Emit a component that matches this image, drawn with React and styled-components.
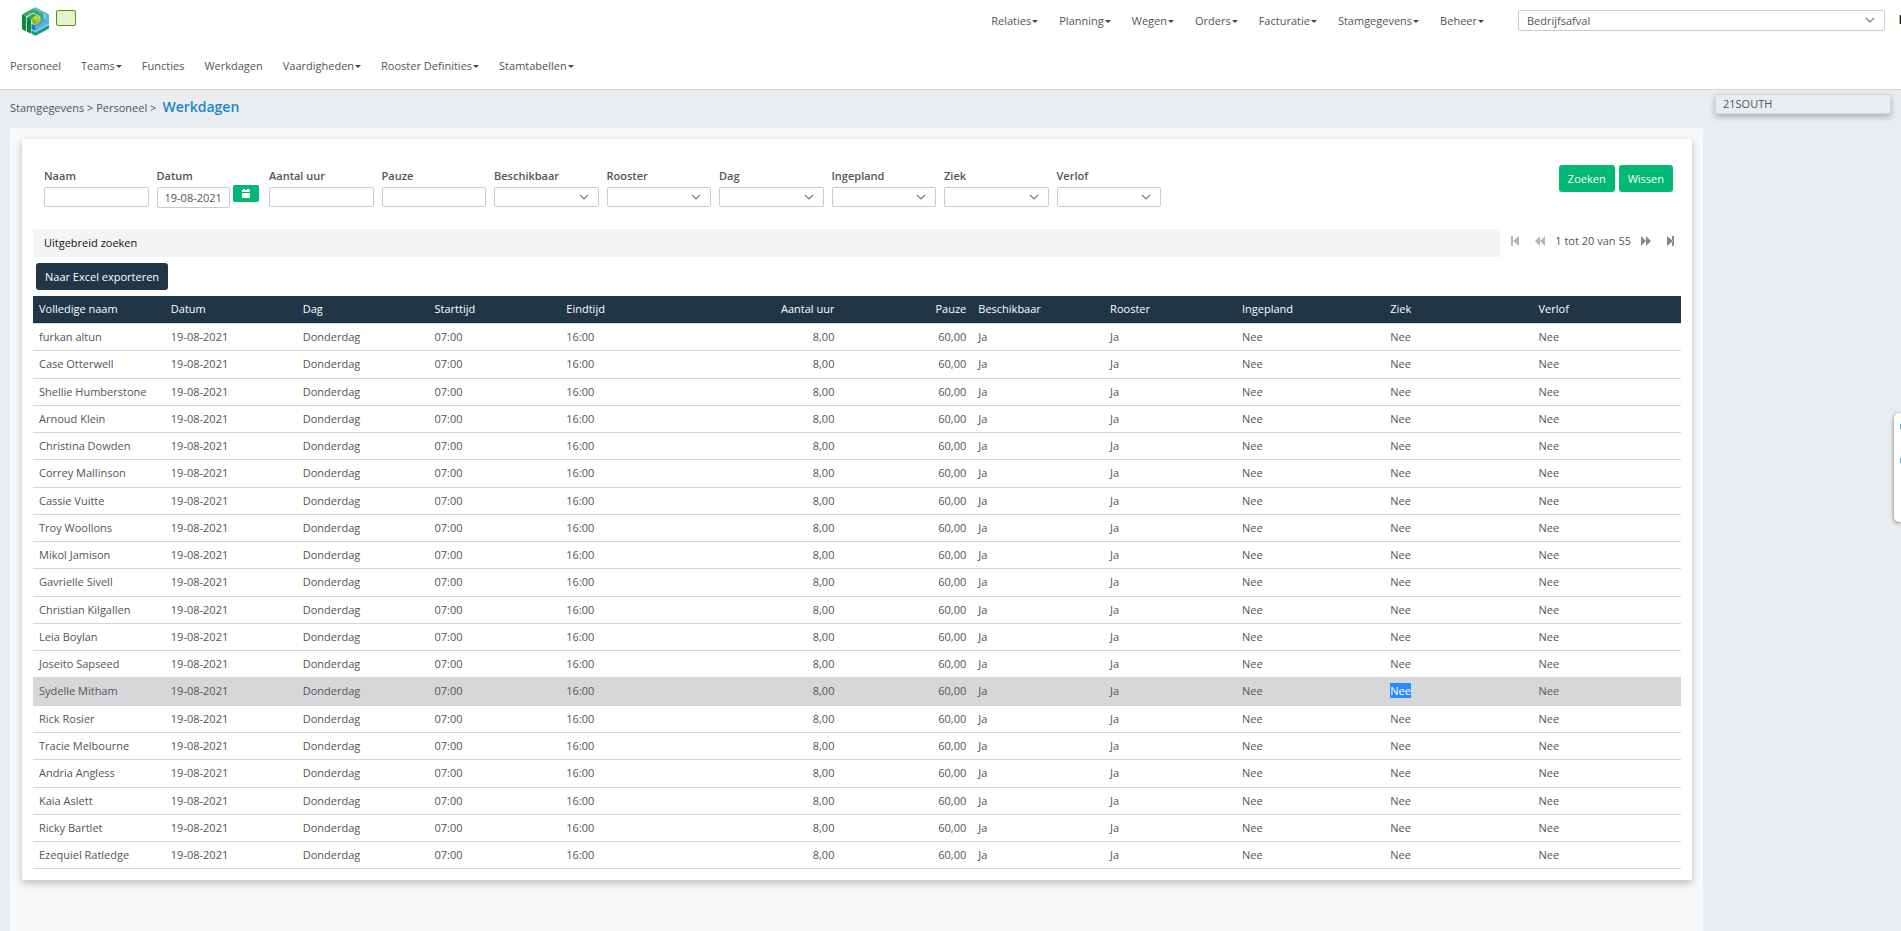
import React from "react";
import styled, { createGlobalStyle } from "styled-components";

const mainMenu = [
  "Relaties",
  "Planning",
  "Wegen",
  "Orders",
  "Facturatie",
  "Stamgegevens",
  "Beheer",
];

const subMenu = [
  { label: "Personeel" },
  { label: "Teams", dropdown: true },
  { label: "Functies" },
  { label: "Werkdagen" },
  { label: "Vaardigheden", dropdown: true },
  { label: "Rooster Definities", dropdown: true },
  { label: "Stamtabellen", dropdown: true },
];

const filters = [
  { id: "naam", label: "Naam", type: "text" },
  { id: "datum", label: "Datum", type: "date" },
  { id: "aantal", label: "Aantal uur", type: "text" },
  { id: "pauze", label: "Pauze", type: "text" },
  { id: "beschikbaar", label: "Beschikbaar", type: "select" },
  { id: "rooster", label: "Rooster", type: "select" },
  { id: "dag", label: "Dag", type: "select" },
  { id: "ingepland", label: "Ingepland", type: "select" },
  { id: "ziek", label: "Ziek", type: "select" },
  { id: "verlof", label: "Verlof", type: "select" },
];

const columns = [
  { key: "naam", label: "Volledige naam", width: 8 },
  { key: "datum", label: "Datum", width: 8 },
  { key: "dag", label: "Dag", width: 8 },
  { key: "start", label: "Starttijd", width: 8 },
  { key: "eind", label: "Eindtijd", width: 8 },
  { key: "uren", label: "Aantal uur", width: 9, align: "right" },
  { key: "pauze", label: "Pauze", width: 8, align: "right" },
  { key: "beschikbaar", label: "Beschikbaar", width: 8 },
  { key: "rooster", label: "Rooster", width: 8 },
  { key: "ingepland", label: "Ingepland", width: 9 },
  { key: "ziek", label: "Ziek", width: 9 },
  { key: "verlof", label: "Verlof", width: 9 },
];

const names = [
  "furkan altun",
  "Case Otterwell",
  "Shellie Humberstone",
  "Arnoud Klein",
  "Christina Dowden",
  "Correy Mallinson",
  "Cassie Vuitte",
  "Troy Woollons",
  "Mikol Jamison",
  "Gavrielle Sivell",
  "Christian Kilgallen",
  "Leia Boylan",
  "Joseito Sapseed",
  "Sydelle Mitham",
  "Rick Rosier",
  "Tracie Melbourne",
  "Andria Angless",
  "Kaia Aslett",
  "Ricky Bartlet",
  "Ezequiel Ratledge",
];

const activeName = "Sydelle Mitham";

const rows = names.map((naam) => ({
  naam,
  datum: "19-08-2021",
  dag: "Donderdag",
  start: "07:00",
  eind: "16:00",
  uren: "8,00",
  pauze: "60,00",
  beschikbaar: "Ja",
  rooster: "Ja",
  ingepland: "Nee",
  ziek: "Nee",
  verlof: "Nee",
}));

const Logo = () => (
  <svg width="27" height="29" viewBox="0 0 82 87" aria-hidden="true">
    <polygon points="41,0 82,22 82,65 41,87 0,66 0,22" fill="#bfe3e2" />
    <polygon points="0,22 12,28 12,73 0,67" fill="#0f8a3c" />
    <polygon points="0,22 33,4 66,20 66,36 56,42 56,28 33,16 12,28" fill="#3aaa5e" />
    <polygon points="15,31 27,36 27,80 15,75" fill="#0b8636" />
    <polygon points="15,31 34,20 52,30 52,35 42,30 27,38 27,36" fill="#2fa355" />
    <polygon points="33,4 41,0 82,22 82,50 41,73 41,60 70,44 70,22" fill="#56b3e4" />
    <polygon points="56,42 70,34 70,44 41,61 41,50" fill="#3f9fdb" />
    <polygon points="29,50 41,56 41,73 29,66" fill="#1679c9" />
    <polygon points="29,70 41,76 82,53 82,65 41,87 29,81" fill="#11a08b" />
    <polygon points="31,32 42,26 53,32 42,38" fill="#c9d82b" />
    <polygon points="31,32 42,38 42,54 31,48" fill="#8fb811" />
    <polygon points="53,32 42,38 42,54 53,48" fill="#a9c70f" />
  </svg>
);

const Chevron = () => (
  <ChevronIcon width="10" height="6" viewBox="0 0 10 6" aria-hidden="true">
    <path d="M1 1l4 4 4-4" fill="none" stroke="#777" strokeWidth="1.1" />
  </ChevronIcon>
);

const CalendarIcon = () => (
  <svg width="8" height="9" viewBox="0 0 8 9" aria-hidden="true">
    <path d="M0 1h1V0h2v1h2V0h2v1h1v2H0zM0 4h8v5H0z" fill="#fff" />
  </svg>
);

const pagerPaths = {
  first: "M1 0h2v10H1zM9 0v10L3 5z",
  previous: "M5 0v10L0 5zM10 0v10L5 5z",
  next: "M0 0v10l5-5zM5 0v10l5-5z",
  last: "M1 0v10l6-5zM6 0h2v10H6z",
};

const PagerButton = ({ kind, label, disabled }) => (
  <PagerControl disabled={disabled} aria-label={label}>
    <svg width="10" height="10" viewBox="0 0 10 10" aria-hidden="true">
      <path d={pagerPaths[kind]} fill={disabled ? "#b5b5b5" : "#888"} />
    </svg>
  </PagerControl>
);

const FilterField = ({ id, label, type }) => (
  <Field>
    <label htmlFor={id}>{label}</label>
    {type === "text" && <Input id={id} type="text" />}
    {type === "date" && (
      <DateGroup>
        <Input id={id} type="text" defaultValue="19-08-2021" $tall />
        <CalendarButton aria-label="Kies datum">
          <CalendarIcon />
        </CalendarButton>
      </DateGroup>
    )}
    {type === "select" && (
      <SelectBox>
        <Select id={id}>
          <option></option>
        </Select>
        <Chevron />
      </SelectBox>
    )}
  </Field>
);

const App = () => {
  return (
    <Page>
      <GlobalStyle />
      <Header>
        <TopBar>
          <Brand href="#" aria-label="Home">
            <Logo />
            <Status />
          </Brand>
          <Menu aria-label="Hoofdmenu">
            {mainMenu.map((label) => (
              <MenuLink href="#" key={label}>
                {label}
                <Caret />
              </MenuLink>
            ))}
          </Menu>
          <CompanySelect>
            <Select aria-label="Administratie" $tall>
              <option>Bedrijfsafval</option>
            </Select>
            <Chevron />
          </CompanySelect>
          <EdgeIcon />
        </TopBar>
        <Menu aria-label="Submenu">
          {subMenu.map(({ label, dropdown }) => (
            <MenuLink href="#" key={label}>
              {label}
              {dropdown && <Caret />}
            </MenuLink>
          ))}
        </Menu>
      </Header>

      <Body>
        <Main>
          <Breadcrumb>
            Stamgegevens &gt; Personeel &gt; <h1>Werkdagen</h1>
          </Breadcrumb>
          <Panel>
            <Card>
              <FilterBar>
                <Fields>
                  {filters.map((filter) => (
                    <FilterField key={filter.id} {...filter} />
                  ))}
                </Fields>
                <Actions>
                  <Button>Zoeken</Button>
                  <Button>Wissen</Button>
                </Actions>
              </FilterBar>

              <Toolbar>
                <Advanced>Uitgebreid zoeken</Advanced>
                <Pager>
                  <PagerButton kind="first" label="Eerste" disabled />
                  <PagerButton kind="previous" label="Vorige" disabled />
                  <span>1 tot 20 van 55</span>
                  <PagerButton kind="next" label="Volgende" />
                  <PagerButton kind="last" label="Laatste" />
                </Pager>
              </Toolbar>

              <ExportRow>
                <Button $dark>Naar Excel exporteren</Button>
              </ExportRow>

              <Table>
                <thead>
                  <tr>
                    {columns.map(({ key, label, width, align }) => (
                      <HeadCell key={key} $width={width} $align={align}>
                        {label}
                      </HeadCell>
                    ))}
                  </tr>
                </thead>
                <tbody>
                  {rows.map((row) => (
                    <Row key={row.naam} $active={row.naam === activeName}>
                      {columns.map(({ key, align }) => (
                        <Cell key={key} $align={align}>
                          {key === "ziek" && row.naam === activeName ? (
                            <Marked>{row[key]}</Marked>
                          ) : (
                            row[key]
                          )}
                        </Cell>
                      ))}
                    </Row>
                  ))}
                </tbody>
              </Table>
            </Card>
          </Panel>
        </Main>
        <Side>
          <SideItem>21SOUTH</SideItem>
        </Side>
      </Body>

      <Drawer>
        <i />
        <i />
      </Drawer>
    </Page>
  );
};

const GlobalStyle = createGlobalStyle`
  * {
    box-sizing: border-box;
  }

  body {
    margin: 0;
    background: #e9edf0;
    color: #555;
    font-family: "Open Sans", sans-serif;
    font-size: 11px;
    line-height: 16px;
    overflow-x: hidden;
  }

  button,
  input,
  select {
    font: inherit;
    color: inherit;
  }
`;

const Page = styled.div`
  display: flex;
  flex-direction: column;
  min-height: 100vh;
`;

const Header = styled.header`
  padding: 7px 0 15px 10px;
  background: #fff;
  border-bottom: 1px solid #d5d5d5;
`;

const TopBar = styled.div`
  display: flex;
  align-items: flex-start;
  height: 51px;
`;

const Brand = styled.a`
  display: flex;
  gap: 7px;
  margin-left: 12px;
  margin-right: auto;
`;

const Status = styled.span`
  width: 20px;
  height: 16px;
  margin-top: 3px;
  background: #e4f3cb;
  border: 1px solid #569505;
  border-radius: 2px;
`;

const Menu = styled.nav`
  display: flex;
  gap: 20px;

  ${TopBar} & {
    gap: 21px;
    margin-right: 34px;
    padding-top: 6px;
  }
`;

const MenuLink = styled.a`
  display: flex;
  align-items: center;
  gap: 1px;
  color: #555;
  text-decoration: none;
  white-space: nowrap;
`;

const Caret = styled.span`
  border: 3px solid transparent;
  border-top-color: #444;
  border-bottom: 0;
`;

const SelectBox = styled.div`
  position: relative;
`;

const CompanySelect = styled(SelectBox)`
  flex: 0 0 367px;
  margin: 3px 14px 0 0;
`;

const Select = styled.select`
  display: block;
  appearance: none;
  width: 100%;
  height: ${(props) => (props.$tall ? "21px" : "20px")};
  padding: 0 24px 0 8px;
  background: #fff;
  border: 1px solid #ccc;
  border-radius: 2px;
`;

const ChevronIcon = styled.svg`
  position: absolute;
  right: 10px;
  top: 7px;
  pointer-events: none;
`;

const EdgeIcon = styled.span`
  width: 2px;
  height: 9px;
  margin-top: 8px;
  background: #222;
  border-left: 1px solid #e0a060;
`;

const Body = styled.div`
  display: flex;
  flex: 1;
  gap: 12px;
  padding: 0 10px;
`;

const Main = styled.main`
  display: flex;
  flex: 1;
  flex-direction: column;
`;

const Breadcrumb = styled.div`
  display: flex;
  align-items: baseline;
  gap: 6px;
  height: 38px;
  padding-top: 8px;

  h1 {
    margin: 0;
    color: #1a85cc;
    font-size: 14px;
    font-weight: 600;
    line-height: 18px;
  }
`;

const Panel = styled.div`
  flex: 1;
  padding: 11px 11px 50px 12px;
  background: #f8f9fb;
`;

const Card = styled.section`
  padding: 26px 11px 11px;
  background: #fff;
  box-shadow: 0 3px 8px rgba(0, 0, 0, 0.25);
`;

const FilterBar = styled.div`
  display: flex;
  align-items: flex-start;
  padding: 0 8px 0 11px;
`;

const Fields = styled.div`
  display: grid;
  flex: 24 0 0;
  grid-template-columns: repeat(10, minmax(0, 1fr));
  gap: 8px;
  height: 64px;
  padding-top: 3px;
`;

const Field = styled.div`
  label {
    display: block;
    margin-bottom: 3px;
    font-weight: 600;
  }
`;

const Input = styled.input`
  display: block;
  width: 100%;
  height: ${(props) => (props.$tall ? "21px" : "20px")};
  padding: 0 7px;
  background: #fff;
  border: 1px solid #ccc;
  border-radius: 2px;
`;

const DateGroup = styled.div`
  display: flex;
  gap: 3px;

  ${Input} {
    flex: 1;
    min-width: 0;
  }
`;

const CalendarButton = styled.button`
  display: flex;
  flex: 0 0 26px;
  align-items: center;
  justify-content: center;
  height: 17px;
  margin: -2px 2px 0 0;
  padding: 0;
  background: #02b875;
  border: 0;
  border-radius: 2px;
`;

const Actions = styled.div`
  display: flex;
  flex: 11 0 0;
  justify-content: flex-end;
  gap: 4px;
`;

const Button = styled.button`
  height: 27px;
  padding: 0 9px;
  background: ${(props) => (props.$dark ? "#203546" : "#02b875")};
  border: 0;
  border-radius: 3px;
  color: #fff;
  white-space: nowrap;
`;

const Toolbar = styled.div`
  display: flex;
  align-items: flex-start;
`;

const Advanced = styled.div`
  flex: 1;
  padding: 6px 11px;
  background: #f4f4f4;
  color: #111;
`;

const Pager = styled.div`
  display: flex;
  align-items: center;
  padding: 4px 5px 0 10px;

  span {
    margin: 0 10px;
    white-space: nowrap;
  }
`;

const PagerControl = styled.button`
  display: flex;
  padding: 0;
  background: none;
  border: 0;

  & + & {
    margin-left: 15px;
  }
`;

const ExportRow = styled.div`
  display: flex;
  padding: 6px 3px;
`;

const Table = styled.table`
  width: 100%;
  table-layout: fixed;
  border-collapse: collapse;
`;

const HeadCell = styled.th`
  width: ${(props) => props.$width}%;
  padding: 4px 6px 6px;
  background: #203546;
  color: #fff;
  font-weight: 400;
  line-height: 17px;
  text-align: ${(props) => props.$align || "left"};
  border-bottom: 1px solid #d5d7d9;
`;

const Row = styled.tr`
  background: ${(props) => (props.$active ? "#d5d7d9" : "#fff")};
`;

const Cell = styled.td`
  padding: 5px 6px;
  line-height: 1.48;
  text-align: ${(props) => props.$align || "left"};
  border-bottom: 1px solid #d5d7d9;
`;

const Marked = styled.mark`
  background: #2a8cff;
  color: #fff;
`;

const Side = styled.aside`
  flex: 0 0 176px;
  padding-top: 4px;
`;

const SideItem = styled.div`
  height: 20px;
  padding: 0 7px;
  border: 1px solid #d5d7d9;
  border-radius: 2px;
  background: #e9edf0;
  box-shadow: 0 3px 6px rgba(0, 0, 0, 0.25);
  line-height: 18px;
`;

const Drawer = styled.div`
  position: fixed;
  top: 413px;
  right: 0;
  display: flex;
  flex-direction: column;
  align-items: flex-end;
  gap: 29px;
  width: 7px;
  height: 109px;
  padding-top: 11px;
  background: #fff;
  border-radius: 5px 0 0 5px;
  box-shadow: 0 1px 4px rgba(0, 0, 0, 0.5);

  i {
    width: 1px;
    height: 5px;
    background: #5aaede;
  }
`;

export default App;
